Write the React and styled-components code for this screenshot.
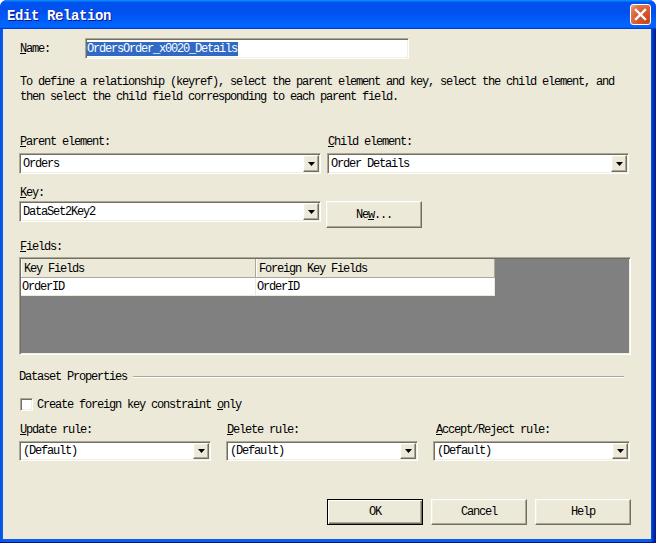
import styled, { createGlobalStyle } from "styled-components"

const GlobalStyle = createGlobalStyle`
  html, body {
    margin: 0;
    padding: 0;
    background: #ffffff;
  }
  body {
    font-family: "Liberation Mono", "DejaVu Sans Mono", monospace;
    font-size: 12px;
    letter-spacing: -1.2px;
    color: #000;
  }
  * { box-sizing: border-box; }
`

const EditRelation = () => {
  return (
    <Window>
      <TitleBar>
        <Title>Edit Relation</Title>
        <CloseButton aria-label="Close">
          <svg width="13" height="13" viewBox="0 0 13 13">
            <path d="M2 2 L11 11 M11 2 L2 11" stroke="#fff" strokeWidth="2.4" strokeLinecap="square" />
          </svg>
        </CloseButton>
      </TitleBar>
      <Frame>
        <Body>
          <NameRow>
            <NameLabel><u>N</u>ame:</NameLabel>
            <TextBox>
              <Selected>OrdersOrder_x0020_Details</Selected>
            </TextBox>
          </NameRow>

          <Description>
            To define a relationship (keyref), select the parent element and key, select the child element, and
            <br />
            then select the child field corresponding to each parent field.
          </Description>

          <PairRow $top={29}>
            <Label><u>P</u>arent element:</Label>
            <Label><u>C</u>hild element:</Label>
          </PairRow>
          <PairRow $top={4}>
            <Combo value="Orders" />
            <Combo value="Order Details" />
          </PairRow>

          <PairRow $top={11}>
            <Label><u>K</u>ey:</Label>
          </PairRow>
          <PairRow $top={1} $align="start">
            <Combo value="DataSet2Key2" />
            <NewButton>Ne<u>w</u>...</NewButton>
          </PairRow>

          <Label $top={11}><u>F</u>ields:</Label>
          <FieldsGrid>
            <Table>
              <HeaderCell>Key Fields</HeaderCell>
              <HeaderCell>Foreign Key Fields</HeaderCell>
              <Cell>OrderID</Cell>
              <Cell>OrderID</Cell>
            </Table>
          </FieldsGrid>

          <GroupRow>
            <GroupTitle>Dataset Properties</GroupTitle>
            <GroupLine />
          </GroupRow>

          <CheckRow>
            <CheckBox />
            <span>Create foreign key constraint <u>o</u>nly</span>
          </CheckRow>

          <RuleRow $top={10}>
            <Label><u>U</u>pdate rule:</Label>
            <Label><u>D</u>elete rule:</Label>
            <Label $indent={3}><u>A</u>ccept/Reject rule:</Label>
          </RuleRow>
          <RuleRow $top={4}>
            <Combo value="(Default)" $h={20} />
            <Combo value="(Default)" $h={20} />
            <Combo value="(Default)" $h={20} />
          </RuleRow>

          <ButtonRow>
            <Button $default>OK</Button>
            <Button>Cancel</Button>
            <Button>Help</Button>
          </ButtonRow>
        </Body>
      </Frame>
    </Window>
  )
}

const Combo = ({ value, $h }) => (
  <ComboBox $h={$h}>
    <ComboText>{value}</ComboText>
    <DropButton>
      <svg width="7" height="4" viewBox="0 0 7 4">
        <polygon points="0,0 7,0 3.5,4" fill="#000" />
      </svg>
    </DropButton>
  </ComboBox>
)

export default function App() {
  return (
    <>
      <GlobalStyle />
      <EditRelation />
    </>
  )
}

const sunken = `
  border: 1px solid;
  border-color: #aca899 #ffffff #ffffff #aca899;
  box-shadow: inset 1px 1px 0 #716f64, inset -1px -1px 0 #f1efe2;
`

const raised = `
  border: 1px solid;
  border-color: #ffffff #716f64 #716f64 #ffffff;
  box-shadow: inset -1px -1px 0 #aca899, inset 1px 1px 0 #f1efe2;
`

const Window = styled.div`
  width: 656px;
  height: 543px;
  display: flex;
  flex-direction: column;
  border-radius: 7px 7px 0 0;
  overflow: hidden;
  background: #0831d9;
`

const TitleBar = styled.div`
  height: 29px;
  flex: none;
  display: flex;
  align-items: center;
  justify-content: space-between;
  padding: 0 5px 0 7px;
  background: linear-gradient(180deg, #0997ff 0%, #0053ee 8%, #0050ee 40%, #0066ff 88%, #0066ff 93%, #005bff 95%, #003dd7 96%, #003dd7 100%);
`

const Title = styled.div`
  font-family: "Liberation Mono", monospace;
  font-weight: bold;
  font-size: 14px;
  letter-spacing: -0.4px;
  color: #fff;
  text-shadow: 1px 1px 0 #0f1089;
  padding-top: 2px;
`

const CloseButton = styled.div`
  width: 21px;
  height: 21px;
  border: 1px solid #fff;
  border-radius: 3px;
  display: flex;
  align-items: center;
  justify-content: center;
  background: radial-gradient(circle at 85% 85%, #c8441a 0%, #da5a31 50%, #e07a55 80%, #f0b49c 100%);
`

const Frame = styled.div`
  flex: 1;
  display: flex;
  padding: 0 5px 3px 3px;
  background: linear-gradient(90deg, #0850e0 0px, #0a5cf0 3px, #0a5cf0 calc(100% - 5px), #0041c8 calc(100% - 4px), #00168c 100%);
  border-bottom: 1px solid #00138c;
`

const Body = styled.div`
  flex: 1;
  background: #ece9d8;
  padding: 0 20px 0 16px;
  display: flex;
  flex-direction: column;
`

const Label = styled.div`
  line-height: 15px;
  height: 15px;
  padding-top: 1px;
  white-space: nowrap;
  padding-left: ${p => p.$indent ?? 1}px;
  margin-top: ${p => p.$top ?? 0}px;
`

const NameRow = styled.div`
  margin-top: 9px;
  display: flex;
  align-items: center;
  height: 21px;
`

const NameLabel = styled(Label)`
  width: 66px;
`

const TextBox = styled.div`
  ${sunken}
  width: 324px;
  height: 21px;
  background: #fff;
  display: flex;
  align-items: center;
  padding: 0 1px;
`

const Selected = styled.span`
  background: #316ac5;
  color: #fff;
  line-height: 14px;
  padding-right: 1px;
`

const Description = styled.div`
  margin-top: 16px;
  padding-left: 1px;
  line-height: 15px;
  white-space: nowrap;
`

const PairRow = styled.div`
  display: grid;
  grid-template-columns: 302px 302px;
  column-gap: 6px;
  align-items: ${p => p.$align ?? "stretch"};
  margin-top: ${p => p.$top ?? 0}px;
`

const ComboBox = styled.div`
  ${sunken}
  height: ${p => p.$h ?? 21}px;
  background: #fff;
  display: flex;
  align-items: stretch;
  padding: 1px;
`

const ComboText = styled.div`
  flex: 1;
  padding-left: 2px;
  display: flex;
  align-items: center;
  white-space: nowrap;
`

const DropButton = styled.div`
  ${raised}
  width: 16px;
  background: #ece9d8;
  display: flex;
  align-items: center;
  justify-content: center;
`

const Button = styled.div`
  width: 96px;
  height: 26px;
  background: #ece9d8;
  display: flex;
  align-items: center;
  justify-content: center;
  white-space: nowrap;
  ${p => p.$default
    ? `border: 1px solid #000; box-shadow: inset 1px 1px 0 #fff, inset -1px -1px 0 #716f64, inset -2px -2px 0 #aca899;`
    : raised}
`

const NewButton = styled(Button)`
  height: 27px;
  margin-left: -1px;
`

const FieldsGrid = styled.div`
  ${sunken}
  margin-top: 3px;
  width: 612px;
  height: 98px;
  background: #808080;
  padding: 1px;
`

const Table = styled.div`
  display: grid;
  grid-template-columns: 235px 239px;
  width: 474px;
`

const HeaderCell = styled.div`
  height: 19px;
  line-height: 18px;
  padding-left: 3px;
  padding-top: 1px;
  background: #ece9d8;
  border-right: 1px solid #aca899;
  border-bottom: 1px solid #aca899;
  box-shadow: inset 1px 0 0 #fff;
  white-space: nowrap;
`

const Cell = styled.div`
  height: 18px;
  line-height: 17px;
  padding-left: 1px;
  padding-top: 1px;
  background: #fff;
  border-right: 1px solid #ece9d8;
  border-bottom: 1px solid #ece9d8;
  white-space: nowrap;
`

const GroupRow = styled.div`
  margin-top: 14px;
  display: flex;
  align-items: center;
  height: 15px;
`

const GroupTitle = styled.div`
  line-height: 15px;
  padding-top: 1px;
  white-space: nowrap;
`

const GroupLine = styled.div`
  flex: 1;
  margin: 0 7px 0 6px;
  border-top: 1px solid #aca899;
  border-bottom: 1px solid #fff;
`

const CheckRow = styled.div`
  margin-top: 13px;
  display: flex;
  align-items: center;
  gap: 4px;
  height: 15px;
  padding-left: 1px;
  white-space: nowrap;
`

const CheckBox = styled.div`
  ${sunken}
  width: 13px;
  height: 13px;
  background: #fff;
`

const RuleRow = styled.div`
  display: grid;
  grid-template-columns: 192px 192px 197px;
  column-gap: 15px;
  margin-top: ${p => p.$top ?? 0}px;
`

const ButtonRow = styled.div`
  margin-top: 38px;
  display: flex;
  justify-content: flex-end;
  gap: 8px;
`
